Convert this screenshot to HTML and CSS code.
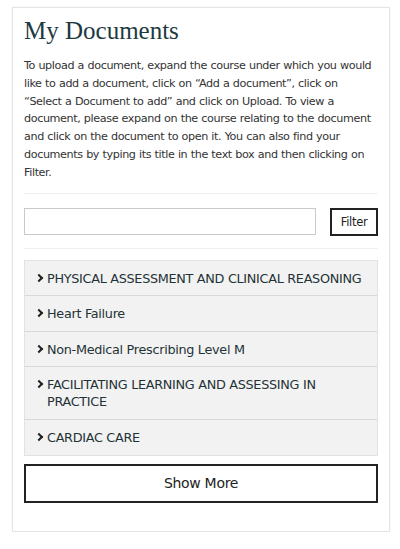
FILE: index.html
```html
<!DOCTYPE html>
<html lang="en">
<head>
    <meta charset="UTF-8">
    <meta name="viewport" content="width=device-width, initial-scale=1.0">
    <title>My Documents</title>
    <link rel="stylesheet" href="styles.css">
</head>
<body>
    <div class="panel">
        <h1>My Documents</h1>
        <p class="intro">To upload a document, expand the course under which you would like to add a document, click on “Add a document”, click on “Select a Document to add” and click on Upload. To view a document, please expand on the course relating to the document and click on the document to open it. You can also find your documents by typing its title in the text box and then clicking on Filter.</p>

        <div class="filter-row">
            <input type="text" class="filter-input">
            <button class="filter-btn">Filter</button>
        </div>

        <ul class="courses">
            <li><span class="chev"></span><span>PHYSICAL ASSESSMENT AND CLINICAL REASONING</span></li>
            <li><span class="chev"></span><span>Heart Failure</span></li>
            <li><span class="chev"></span><span>Non-Medical Prescribing Level M</span></li>
            <li><span class="chev"></span><span>FACILITATING LEARNING AND ASSESSING IN PRACTICE</span></li>
            <li><span class="chev"></span><span>CARDIAC CARE</span></li>
        </ul>

        <button class="show-more">Show More</button>
    </div>
</body>
</html>
```

FILE: styles.css
```css
body {
    margin: 0;
    padding: 7px 10px 0 12px;
    background: #fff;
    font-family: "DejaVu Sans", Verdana, sans-serif;
    color: #333;
}

.panel {
    border: 1px solid #e4e4e4;
    padding: 10px 11px 28px 11px;
    box-shadow: 0 0 2px rgba(0, 0, 0, 0.06);
}

.panel h1 {
    font-family: "Liberation Serif", "Times New Roman", serif;
    font-weight: normal;
    font-size: 25px;
    line-height: 26px;
    color: #1d3a3f;
    margin: 0 0 13px 0;
}

.intro {
    font-size: 11.2px;
    line-height: 17.8px;
    margin: 0;
    padding-bottom: 11px;
    border-bottom: 1px solid #f0f0f0;
    letter-spacing: -0.4px;
    word-spacing: 0.3px;
}

.filter-row {
    display: flex;
    align-items: center;
    gap: 14px;
    padding: 14px 0 12px 0;
    border-bottom: 1px solid #f0f0f0;
}

.filter-input {
    flex: 1;
    height: 27px;
    box-sizing: border-box;
    border: 1px solid #c9c9c9;
    margin: 0;
}

.filter-btn {
    height: 28px;
    width: 48px;
    box-sizing: border-box;
    border: 2px solid #222;
    background: #fff;
    font-family: "DejaVu Sans", Verdana, sans-serif;
    font-size: 11.5px;
    color: #222;
    padding: 0;
    letter-spacing: -0.3px;
}

.courses {
    list-style: none;
    margin: 11px 0 0 0;
    padding: 0;
    border: 1px solid #e2e2e2;
}

.courses li {
    display: flex;
    align-items: flex-start;
    gap: 5px;
    padding: 9px 10px 8.6px 11px;
    background: #f2f2f2;
    border-top: 1px solid #d8d8d8;
    font-size: 12.8px;
    line-height: 17px;
    color: #1f3236;
    letter-spacing: -0.3px;
}

.courses li:first-child {
    border-top: none;
}

.chev {
    flex: none;
    width: 4px;
    height: 4px;
    margin-top: 5px;
    border-right: 2px solid #222;
    border-bottom: 2px solid #222;
    transform: rotate(-45deg);
}

.show-more {
    display: block;
    width: 100%;
    height: 39px;
    margin-top: 8px;
    background: #fff;
    border: 2px solid #222;
    font-family: "DejaVu Sans", Verdana, sans-serif;
    font-size: 14px;
    color: #222;
    letter-spacing: -0.3px;
}
```
